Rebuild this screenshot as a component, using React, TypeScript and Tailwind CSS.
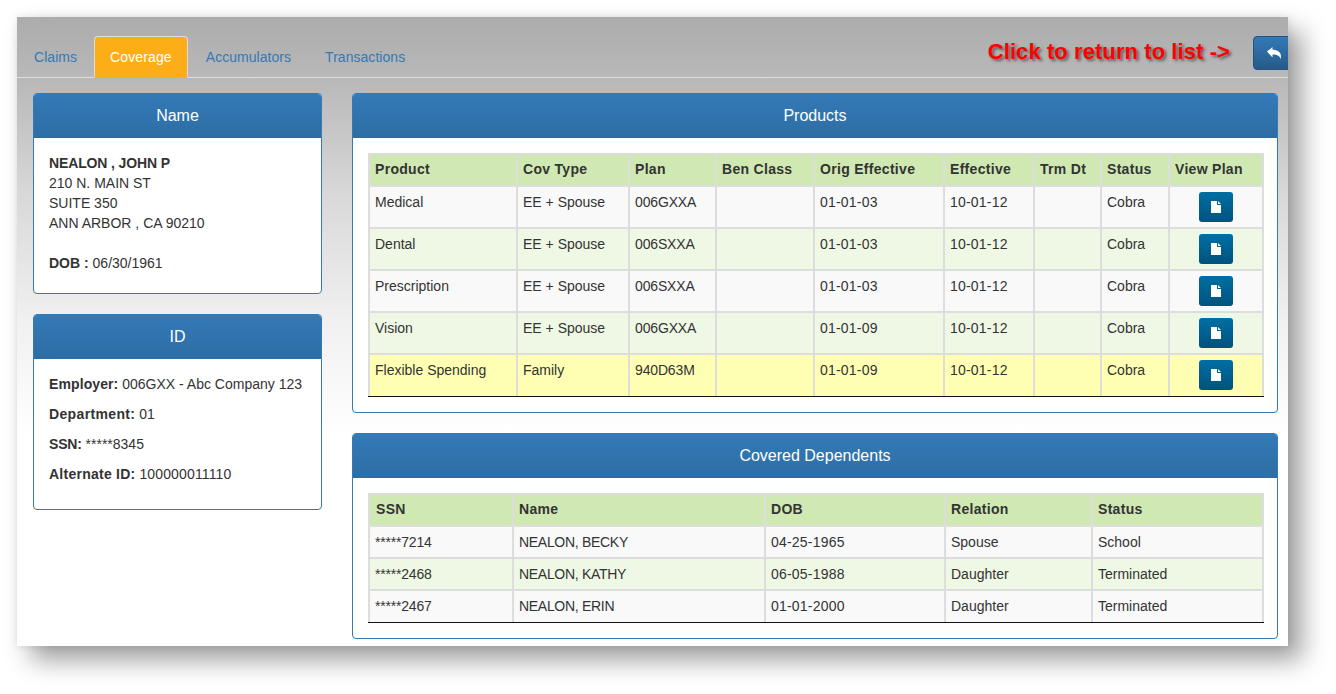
const products = [
  { product: "Medical", cov: "EE + Spouse", plan: "006GXXA", orig: "01-01-03", eff: "10-01-12", status: "Cobra" },
  { product: "Dental", cov: "EE + Spouse", plan: "006SXXA", orig: "01-01-03", eff: "10-01-12", status: "Cobra" },
  { product: "Prescription", cov: "EE + Spouse", plan: "006SXXA", orig: "01-01-03", eff: "10-01-12", status: "Cobra" },
  { product: "Vision", cov: "EE + Spouse", plan: "006GXXA", orig: "01-01-09", eff: "10-01-12", status: "Cobra" },
  { product: "Flexible Spending", cov: "Family", plan: "940D63M", orig: "01-01-09", eff: "10-01-12", status: "Cobra" },
]

const dependents = [
  { ssn: "*****7214", name: "NEALON, BECKY", dob: "04-25-1965", relation: "Spouse", status: "School" },
  { ssn: "*****2468", name: "NEALON, KATHY", dob: "06-05-1988", relation: "Daughter", status: "Terminated" },
  { ssn: "*****2467", name: "NEALON, ERIN", dob: "01-01-2000", relation: "Daughter", status: "Terminated" },
]

const productCols = ["w-[148px]", "w-[112px]", "w-[87px]", "w-[98px]", "w-[130px]", "w-[90px]", "w-[67px]", "w-[68px]", "w-[94px]"]
const productHeads = ["Product", "Cov Type", "Plan", "Ben Class", "Orig Effective", "Effective", "Trm Dt", "Status", "View Plan"]
const depCols = ["w-[144px]", "w-[252px]", "w-[180px]", "w-[147px]", "w-[171px]"]
const depHeads = ["SSN", "Name", "DOB", "Relation", "Status"]

function Panel({ title, children, className }: { title: string; children: React.ReactNode; className?: string }) {
  return (
    <div className={`rounded border border-[#337ab7] bg-white ${className ?? ""}`}>
      <div className="h-[44px] rounded-t-[3px] bg-[linear-gradient(#337ab7,#2e6da4)] text-center text-[16px] leading-[44px] text-white">
        {title}
      </div>
      {children}
    </div>
  )
}

function FileIcon() {
  return (
    <svg width="10" height="12" viewBox="0 0 10 12" className="block">
      <path d="M0 0h6v4h4v8H0z M7 0l3 3H7z" fill="#fff" />
    </svg>
  )
}

function ReplyIcon() {
  return (
    <svg width="14" height="12" viewBox="0 0 14 12" className="block">
      <path d="M0 4.500L5.500 0v2.800c5 0 8.500 2.400 8.500 6.700 0 .9-.2 1.700-.5 2.500-.6-2.800-3-4.400-8-4.400v2.900z" fill="#fff" />
    </svg>
  )
}

function TableHead({ cols, heads, firstPad }: { cols: string[]; heads: string[]; firstPad?: string }) {
  return (
    <>
      <colgroup>
        {cols.map((c, i) => (
          <col key={i} className={c} />
        ))}
      </colgroup>
      <thead>
        <tr className="h-[32px] bg-[#d0e9b3]">
          {heads.map((h) => (
            <th key={h} className={`border-2 border-[#ddd] px-[5px] pb-[2px] text-left font-bold tracking-[0.3px] ${firstPad ?? ""}`}>
              {h}
            </th>
          ))}
        </tr>
      </thead>
    </>
  )
}

export default function App() {
  return (
    <div className="h-[694px] w-[1336px] overflow-hidden bg-white pl-[17px] pt-[17px] font-['Liberation_Sans',Arial,sans-serif] text-[14px] leading-[20px] text-[#333]">
      <div className="h-[629px] w-[1271px] overflow-hidden bg-[linear-gradient(#acacac,#bababa_11%,#d8d8d8_28%,#f0f0f0_48%,#ffffff_66%)] shadow-[14px_14px_24px_rgba(0,0,0,0.38),0_0_8px_rgba(0,0,0,0.1)]">
        {/* Tabs */}
        <div className="flex h-[61px] items-start border-b border-[#ddd] pl-[1px] pt-[19px]">
          <ul className="flex">
            {["Claims", "Coverage", "Accumulators", "Transactions"].map((tab) => (
              <li key={tab} className="mr-[2px] first:mr-[1px]">
                <a
                  className={
                    tab === "Coverage"
                      ? "block h-[42px] rounded-t border border-[#ddd] border-b-transparent bg-[#fdae17] px-[15px] py-[10px] tracking-[0.13px] text-white"
                      : "block h-[42px] border border-transparent px-[15px] py-[10px] tracking-[0.04px] text-[#337ab7]"
                  }
                >
                  {tab}
                </a>
              </li>
            ))}
          </ul>
          <div className="ml-auto flex items-start">
            <span className="mt-[2px] text-[22px] font-bold leading-[28px] tracking-[0.08px] text-[#ff0000] [text-shadow:2px_2px_3px_rgba(0,0,0,0.5)]">
              Click to return to list -&gt;
            </span>
            <button className="ml-[23px] mr-[-7px] flex h-[34px] w-[42px] items-center justify-center rounded border border-[#245580] bg-[linear-gradient(#337ab7,#265a88)]">
              <ReplyIcon />
            </button>
          </div>
        </div>

        <div className="mt-[15px] flex items-start gap-[30px] pl-[16px]">
          {/* Left column */}
          <div className="flex w-[289px] flex-col gap-[20px]">
            <Panel title="Name">
              <div className="px-[15px] pb-[20px] pt-[15px]">
                <div className="font-bold tracking-[-0.13px]">NEALON , JOHN P</div>
                <div>210 N. MAIN ST</div>
                <div>SUITE 350</div>
                <div>ANN ARBOR , CA 90210</div>
                <div className="mt-[20px]">
                  <b>DOB :</b> 06/30/1961
                </div>
              </div>
            </Panel>
            <Panel title="ID">
              <div className="flex flex-col gap-[10px] px-[15px] pb-[25px] pt-[15px]">
                <div>
                  <b className="tracking-[0.1px]">Employer:</b> 006GXX - Abc Company 123
                </div>
                <div>
                  <b className="tracking-[0.35px]">Department:</b> 01
                </div>
                <div>
                  <b className="tracking-[-0.2px]">SSN:</b> *****8345
                </div>
                <div>
                  <b className="tracking-[0.25px]">Alternate ID:</b> <span className="tracking-[0.15px]">100000011110</span>
                </div>
              </div>
            </Panel>
          </div>

          {/* Right column */}
          <div className="flex w-[926px] flex-col gap-[20px]">
            <Panel title="Products">
              <div className="px-[15px] pb-[15px] pt-[15px]">
                <div className="w-[896px] border-b border-[#111]">
                  <table className="w-[894px] table-fixed border-collapse">
                    <TableHead cols={productCols} heads={productHeads} />
                    <tbody>
                      {products.map((p, i) => {
                        const last = i === products.length - 1
                        const bg = last ? "bg-[#ffffb3]" : i % 2 === 0 ? "bg-[#f9f9f9]" : "bg-[#eff8e5]"
                        const cell = `border-2 border-[#ddd] px-[5px] pt-[5px] align-top ${last ? "border-b-0" : ""}`
                        return (
                          <tr key={p.product} className={`h-[42px] ${bg}`}>
                            <td className={cell}>{p.product}</td>
                            <td className={cell}>{p.cov}</td>
                            <td className={`${cell} tracking-[-0.15px]`}>{p.plan}</td>
                            <td className={cell}></td>
                            <td className={`${cell} tracking-[0.2px]`}>{p.orig}</td>
                            <td className={`${cell} tracking-[0.2px]`}>{p.eff}</td>
                            <td className={cell}></td>
                            <td className={cell}>{p.status}</td>
                            <td className={cell}>
                              <button className="ml-[24px] flex h-[30px] w-[34px] items-center justify-center rounded-[3px] bg-[linear-gradient(#006fa3,#00527d)]">
                                <FileIcon />
                              </button>
                            </td>
                          </tr>
                        )
                      })}
                    </tbody>
                  </table>
                </div>
              </div>
            </Panel>
            <Panel title="Covered Dependents">
              <div className="px-[15px] pb-[15px] pt-[15px]">
                <div className="w-[896px] border-b border-[#111]">
                  <table className="w-[894px] table-fixed border-collapse">
                    <TableHead cols={depCols} heads={depHeads} firstPad="first:pl-[6px]" />
                    <tbody>
                      {dependents.map((d, i) => {
                        const last = i === dependents.length - 1
                        const cell = `border-2 border-[#ddd] px-[5px] ${last ? "border-b-0 pb-[2px]" : ""}`
                        return (
                          <tr key={d.ssn} className={`h-[32px] ${i % 2 === 0 ? "bg-[#f9f9f9]" : "bg-[#eff8e5]"}`}>
                            <td className={`${cell} tracking-[-0.2px]`}>{d.ssn}</td>
                            <td className={`${cell} tracking-[-0.3px]`}>{d.name}</td>
                            <td className={`${cell} tracking-[0.2px]`}>{d.dob}</td>
                            <td className={cell}>{d.relation}</td>
                            <td className={cell}>{d.status}</td>
                          </tr>
                        )
                      })}
                    </tbody>
                  </table>
                </div>
              </div>
            </Panel>
          </div>
        </div>
      </div>
    </div>
  )
}
